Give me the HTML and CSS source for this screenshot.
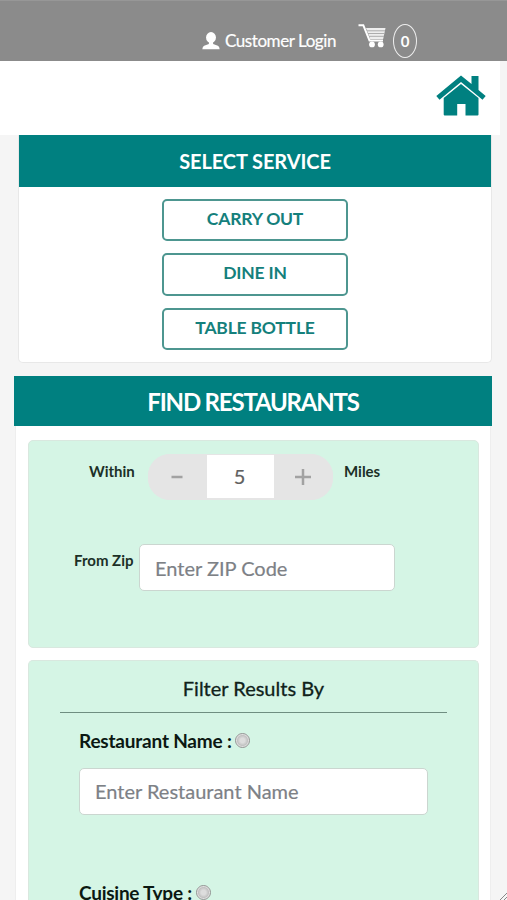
FILE: index.html
```html
<!DOCTYPE html>
<html lang="en">
<head>
<meta charset="utf-8">
<title>Find Restaurants</title>
<link rel="stylesheet" href="styles.css">
</head>
<body>
<header class="topbar">
  <a class="login">
    <svg class="user-icon" viewBox="0 0 17 17"><ellipse cx="8.5" cy="5.2" rx="4.7" ry="5.1"/><path d="M6.5 9h4v2.300l4.500 1.600q1.500.6 1.700 3.300H.3q.2-2.700 1.700-3.300l4.500-1.600z"/></svg>
    <span class="login-text">Customer Login</span>
  </a>
  <svg class="cart-icon" viewBox="0 0 29 25"><path class="cart-frame" d="M.5 2.200h4.800l6.200 15.300h13.500"/><path class="cart-basket" d="M8 5h19.500l-2.300 11h-13z"/><path class="cart-lines" d="M9 7.800h18M10 10.500h16.500M11 13.300h15"/><circle cx="14" cy="21.400" r="2.900"/><circle cx="22.700" cy="21.400" r="2.900"/></svg>
  <span class="cart-count">0</span>
</header>
<nav class="navbar">
  <svg class="home-icon" viewBox="0 0 50 42"><path d="M25 .5 35.500 9V1h7v14l7.200 6.100-3.200 3.600L25 6.900 3.500 24.700.3 21.100z"/><path d="M25 9 42.500 23v16.500q0 1-1 1H29.500V29h-8.300v11.500H8.700q-1 0-1-1V23z"/></svg>
</nav>
<main>
  <section class="service">
    <h2 class="title">SELECT SERVICE</h2>
    <div class="choices">
      <button class="choice">CARRY OUT</button>
      <button class="choice">DINE IN</button>
      <button class="choice">TABLE BOTTLE</button>
    </div>
  </section>
  <section class="finder">
    <h2 class="title find-title">FIND RESTAURANTS</h2>
    <div class="panels">
      <div class="panel location">
        <div class="distance">
          <label class="small-label within">Within</label>
          <div class="stepper">
            <button class="step"><svg viewBox="0 0 18 18"><path d="M3.500 9h11"/></svg></button>
            <span class="amount">5</span>
            <button class="step"><svg viewBox="0 0 18 18"><path d="M1 9h16M9 1v16"/></svg></button>
          </div>
          <span class="small-label miles">Miles</span>
        </div>
        <div class="zip">
          <label class="small-label">From Zip</label>
          <input class="field zip-field" placeholder="Enter ZIP Code">
        </div>
      </div>
      <div class="panel filters">
        <h3 class="filter-title">Filter Results By</h3>
        <div class="filter-row"><label>Restaurant Name :</label><i class="radio"></i></div>
        <input class="field name-field" placeholder="Enter Restaurant Name">
        <div class="filter-row cuisine"><label>Cuisine Type :</label><i class="radio"></i></div>
      </div>
    </div>
  </section>
</main>
<svg class="grip" viewBox="0 0 8 8"><path d="M1 8 8 1M5 8l3-3"/></svg>
</body>
</html>
```
FILE: styles.css
```css
* { box-sizing: border-box; }
html, body { height: 900px; overflow: hidden; }
body { margin: 0; background: #f5f5f5; font-family: Lato, "Liberation Sans", sans-serif; color: #111; }
svg { display: block; }
span, label { white-space: nowrap; }
.topbar { height: 61px; background: #8b8b8b; border-top: 1px solid #979797; display: flex; align-items: flex-start; padding-left: 202px; color: #fff; }
.login { display: flex; margin-top: 29px; width: 156px; }
.user-icon { width: 18px; height: 18px; margin-top: 2px; fill: #fff; }
.login-text { margin-left: 5px; font-size: 17px; line-height: 21px; letter-spacing: -.43px; -webkit-text-stroke: .2px #fff; }
.cart-icon { width: 29px; height: 25px; margin-top: 22px; fill: #fff; }
.cart-frame { fill: none; stroke: #fff; stroke-width: 2; }
.cart-basket { fill: #eee; }
.cart-lines { stroke: #a5a5a5; stroke-width: .9; }
.cart-count { margin: 23px 0 0 6px; width: 24px; height: 34px; border: 1.500px solid #eee; border-radius: 50%; font-size: 15px; font-weight: 700; line-height: 33px; text-align: center; }
.navbar { width: 500px; height: 74px; background: #fff; padding: 14px 0 0 436px; }
.home-icon { width: 50px; height: 42px; fill: #008080; }
.service { width: 474px; height: 228px; margin-left: 18px; background: #fff; border: 1px solid #e8e8e8; border-top: 0; border-radius: 0 0 5px 5px; }
.title { margin: 0; height: 52px; background: #008080; color: #fff; text-align: center; font-size: 20px; line-height: 52px; font-weight: 700; letter-spacing: -.1px; }
.choices { display: flex; flex-direction: column; align-items: center; gap: 12px; padding-top: 12px; }
.choice { width: 186px; height: 42.300px; border: 2px solid #4d9690; border-radius: 5px; background: #fff; padding: 0 0 3px; color: #14807c; font: 700 17.500px/36px Lato, sans-serif; text-align: center; letter-spacing: -.2px; }
.finder { width: 478px; height: 524px; margin: 13px 0 0 14px; }
.find-title { height: 50px; line-height: 51px; font-size: 24px; letter-spacing: -1.200px; }
.panels { margin: 0 1px; background: #fff; padding: 14px 13px 0; height: 474px; border-right: 1px solid #eee; border-left: 1px solid #eee; }
.panel { background: #d5f5e5; border: 1px solid #d9e8df; border-radius: 5px; width: 451px; margin-left: -1px; }
.location { height: 208px; }
.distance { display: flex; align-items: flex-start; padding: 13px 0 0 60px; }
.small-label { font-size: 15px; line-height: 20px; font-weight: 700; color: #1c3027; }
.within { width: 59px; margin-top: 7px; }
.miles { margin: 7px 0 0 10px; padding-left: 1px; }
.stepper { display: flex; width: 185px; height: 46px; border-radius: 22px; overflow: hidden; background: #e5e5e5; }
.step { width: 59px; border: 0; background: #e5e5e5; padding: 0 2px 0 0; display: flex; align-items: center; justify-content: center; }
.step svg { width: 18px; height: 18px; fill: none; stroke: #a2a2a2; stroke-width: 2.500; }
.amount { width: 67px; height: 43px; margin-top: 1px; padding-right: 2px; background: #fff; color: #606060; font-size: 20px; line-height: 43px; text-align: center; -webkit-text-stroke: .2px #606060; }
.zip { display: flex; padding: 43px 0 0 46px; }
.zip .small-label { width: 65px; margin: 7px 0 0 -1px; }
.field { display: block; border: 1px solid #cbd6d0; border-radius: 5px; background: #fff; height: 47px; padding: 0 15px; font: 20px Lato, sans-serif; }
.field::placeholder { color: #7d8186; opacity: 1; -webkit-text-stroke: .2px #7d8186; }
.zip-field { width: 256px; margin-top: 1px; }
.filters { margin-top: 12px; height: 240px; overflow: hidden; border-bottom: 0; border-radius: 5px 5px 0 0; }
.filter-title { margin: 0 31px; height: 52px; border-bottom: 1px solid #6f8e81; text-align: center; font-size: 20px; line-height: 54px; font-weight: 400; color: #10221a; -webkit-text-stroke: .3px #10221a; }
.filter-row { display: flex; align-items: center; height: 24px; margin: 16px 0 0 50px; font-size: 19px; font-weight: 700; letter-spacing: -.2px; color: #0b1812; }
.filter-row label { line-height: 22px; }
.radio { width: 15px; height: 15px; margin: -1px 0 0 3px; border: 1px solid #929292; border-radius: 50%; background: radial-gradient(circle, #ddd 25%, #c2c2c2 55%, #ededed 70%); }
.name-field { width: 349px; margin: 15px 0 0 50px; padding-bottom: 2px; }
.cuisine { margin-top: 66px; }
.cuisine label { letter-spacing: -.25px; }
.cuisine .radio { margin-left: 4px; }
.grip { position: fixed; right: 0; bottom: 0; width: 8px; height: 8px; fill: none; stroke: #888; }
```
